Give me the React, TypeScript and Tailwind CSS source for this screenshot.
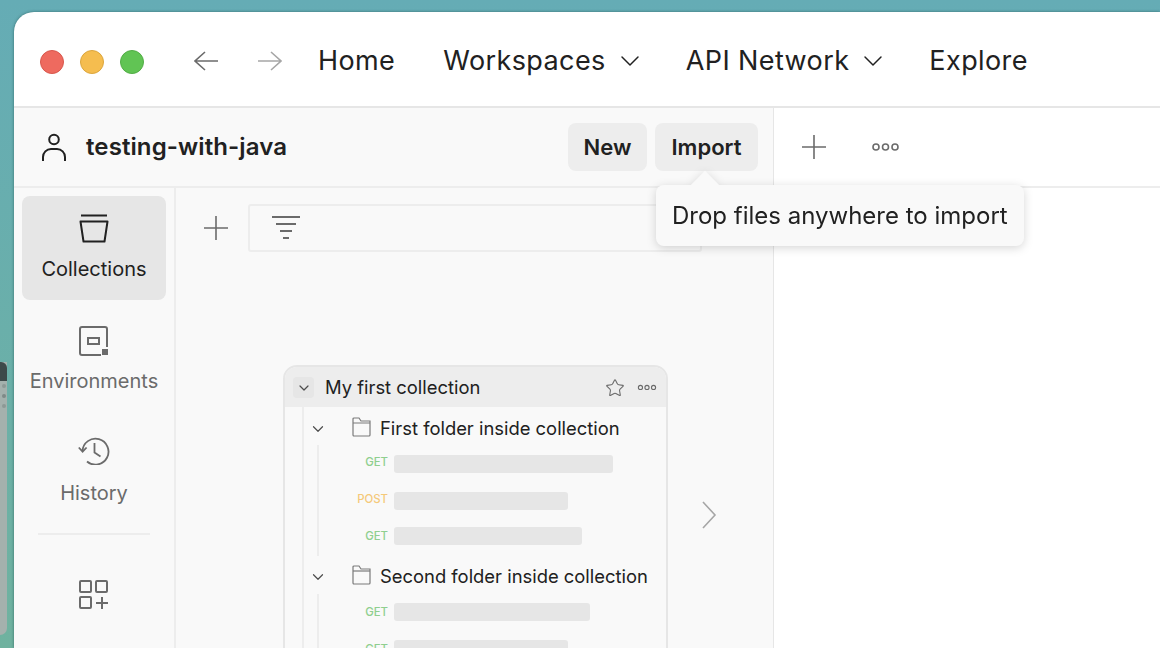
import { ChevronDown, Star } from "lucide-react";

const Dots = ({ size = 32 }: { size?: number }) => (
  <svg width={size} height={size / 2.9} viewBox="0 0 29 10" fill="none" stroke="#6b6b6b" strokeWidth="1.6">
    <circle cx="5" cy="5" r="3" />
    <circle cx="14.5" cy="5" r="3" />
    <circle cx="24" cy="5" r="3" />
  </svg>
);

const UserIcon = () => (
  <svg width="26" height="30" viewBox="0 0 26 30" fill="none" stroke="#212121" strokeWidth="2">
    <circle cx="13" cy="7.5" r="4.8" />
    <path d="M2 29v-4a8 8 0 0 1 8-8h6a8 8 0 0 1 8 8v4" />
  </svg>
);

const NavArrow = ({ next }: { next?: boolean }) => (
  <svg width="24" height="20" viewBox="0 0 24 20" fill="none" stroke={next ? "#a6a6a6" : "#6b6b6b"} strokeWidth="1.6">
    {next ? <path d="M0 10h23M13 1l10 9-10 9" /> : <path d="M24 10H1M11 1L1 10l10 9" />}
  </svg>
);

const CollectionsIcon = () => (
  <svg width="30" height="30" viewBox="0 0 30 30" fill="none" stroke="#212121" strokeWidth="2">
    <path d="M2 2h26" transform="translate(0 -0.5)" />
    <path d="M1.5 7.5h27l-3 20h-21z" strokeLinejoin="round" />
  </svg>
);

const EnvIcon = () => (
  <svg width="30" height="30" viewBox="0 0 30 30" fill="none" stroke="#6b6b6b" strokeWidth="2">
    <path d="M28 21V3a2 2 0 0 0-2-2H3a2 2 0 0 0-2 2v24a2 2 0 0 0 2 2h19" />
    <rect x="9" y="12" width="11" height="6" />
    <rect x="23" y="23" width="6" height="6" fill="#6b6b6b" stroke="none" />
  </svg>
);

const HistoryIcon = () => (
  <svg width="32" height="30" viewBox="0 0 32 30" fill="none" stroke="#6b6b6b" strokeWidth="1.8">
    <path d="M4.5 16A13 13 0 1 1 9 26.5" />
    <path d="M0.8 12.5l3.8 4.2 4-4.2" />
    <path d="M16.5 8v9.5l6 4" />
  </svg>
);

const AppsIcon = () => (
  <svg width="30" height="30" viewBox="0 0 30 30" fill="none" stroke="#6b6b6b" strokeWidth="2">
    <rect x="1" y="1" width="11" height="11" rx="1" />
    <rect x="17" y="1" width="11" height="11" rx="1" />
    <rect x="1" y="17" width="11" height="11" rx="1" />
    <path d="M23 17v12M17 23h12" />
  </svg>
);

const FilterIcon = () => (
  <svg width="30" height="26" viewBox="0 0 30 26" fill="none" stroke="#6b6b6b" strokeWidth="2">
    <path d="M1 2h28M5 9h20M9 16h12M12 23h6" />
  </svg>
);

const FolderIcon = () => (
  <svg width="19" height="20" viewBox="0 0 19 20" fill="none" stroke="#7a7a7a" strokeWidth="1.2">
    <path d="M1 18V2a1 1 0 0 1 1-1h5l2 3h9v14a1 1 0 0 1-1 1H2a1 1 0 0 1-1-1z" />
    <path d="M1 6h17" />
  </svg>
);

const PlusIcon = () => (
  <svg width="26" height="26" viewBox="0 0 26 26" fill="none" stroke="#6b6b6b" strokeWidth="1.6">
    <path d="M13 1v24M1 13h24" />
  </svg>
);

const NextIcon = () => (
  <svg width="16" height="28" viewBox="0 0 16 28" fill="none" stroke="#a6a6a6" strokeWidth="1.6">
    <path d="M2 1l12 13L2 27" />
  </svg>
);

function NavItem({ icon, label, active }: { icon: React.ReactNode; label: string; active?: boolean }) {
  return (
    <div className={`w-[144px] h-[104px] rounded-lg flex flex-col items-center pt-[18px] ${active ? "bg-[#e6e6e6] text-[#212121]" : "text-[#6b6b6b]"}`}>
      <div className="h-[30px] mb-[13px]">{icon}</div>
      <span className="text-[20px] leading-6">{label}</span>
    </div>
  );
}

function Request({ method, width, color, raised }: { method: string; width: string; color: string; raised?: boolean }) {
  return (
    <div className="flex items-center h-[18px]">
      <span className={`w-[75px] pr-[6px] text-right text-[11.4px] font-medium ${color} ${raised ? "-mt-[2px]" : "mt-[2px]"}`}>{method}</span>
      <div className={`h-[18px] rounded-[3px] bg-[#e6e6e6] ${width}`} />
    </div>
  );
}

function FolderRow({ name }: { name: string }) {
  return (
    <div className="flex items-center h-[24px] pl-[5px]">
      <ChevronDown className="w-[18px] h-[18px] text-[#4d4d4d]" strokeWidth={1.6} />
      <span className="ml-[25px] -mt-[4px]"><FolderIcon /></span>
      <span className="ml-[9px] text-[18.4px] text-[#212121] whitespace-nowrap">{name}</span>
    </div>
  );
}

export default function App() {
  return (
    <div className="relative w-[1160px] h-[648px] overflow-hidden pl-[14px] pt-[12px] bg-gradient-to-b from-[#65acb5] to-[#6fb29f] font-['Inter',sans-serif]">
      {/* app window peeking out behind */}
      <div className="absolute left-0 top-[362px] w-[7px] h-[273px] rounded-br-xl bg-[#a4b1ad] overflow-hidden">
        <div className="h-[19px] bg-[#3d4a4a] rounded-tr-md" />
        <div className="mt-[3px] flex flex-col gap-[6px] items-end pr-[1px]">
          <span className="w-[4px] h-[4px] rounded-full bg-[#8d9995]" />
          <span className="w-[4px] h-[4px] rounded-full bg-[#7f8a87]" />
          <span className="w-[4px] h-[4px] rounded-full bg-[#8d9995]" />
        </div>
      </div>

      <div className="relative h-full rounded-tl-[20px] bg-white overflow-hidden flex flex-col shadow-[0_0_3px_rgba(30,80,80,0.7)]">
        {/* top bar */}
        <div className="h-[96px] shrink-0 border-b-2 border-[#e6e6e6] flex items-center pl-[26px] pt-[4px] text-[#212121] text-[27px] tracking-[0.4px]">
          <div className="flex gap-4 mt-[2px]">
            <span className="w-[24px] h-[24px] rounded-full bg-[#ee6a5f] border border-[#d8574c]" />
            <span className="w-[24px] h-[24px] rounded-full bg-[#f5bd4f] border border-[#dca63d]" />
            <span className="w-[24px] h-[24px] rounded-full bg-[#61c454] border border-[#52ad46]" />
          </div>
          <span className="ml-[50px]"><NavArrow /></span>
          <span className="ml-[40px]"><NavArrow next /></span>
          <span className="ml-[36px]">Home</span>
          <span className="ml-[48px]">Workspaces</span>
          <ChevronDown className="ml-[8px] w-[32px] h-[32px]" strokeWidth={1.1} />
          <span className="ml-[40px]">API Network</span>
          <ChevronDown className="ml-[8px] w-[32px] h-[32px]" strokeWidth={1.1} />
          <span className="ml-[40px]">Explore</span>
        </div>

        <div className="flex flex-1 min-h-0">
          {/* left pane */}
          <div className="w-[760px] shrink-0 bg-[#f9f9f9] border-r border-[#e6e6e6] flex flex-col">
            <div className="h-[80px] shrink-0 border-b-2 border-[#ededed] flex items-center pl-[27px] pr-[15px]">
              <UserIcon />
              <span className="ml-[19px] text-[24px] tracking-[0.1px] font-semibold text-[#212121]">testing-with-java</span>
              <div className="ml-auto flex gap-2 text-[22px] font-semibold text-[#212121]">
                <span className="h-[48px] w-[79px] rounded-lg bg-[#ededed] flex items-center justify-center">New</span>
                <span className="h-[48px] w-[103px] rounded-lg bg-[#ededed] flex items-center justify-center">Import</span>
              </div>
            </div>

            <div className="flex flex-1 min-h-0">
              {/* sidebar */}
              <div className="w-[162px] shrink-0 border-r-2 border-[#ededed] px-2 pt-[8px] flex flex-col">
                <NavItem icon={<CollectionsIcon />} label="Collections" active />
                <div className="mt-[8px]">
                  <NavItem icon={<EnvIcon />} label="Environments" />
                </div>
                <div className="mt-[8px]">
                  <NavItem icon={<div className="-mt-[3px]"><HistoryIcon /></div>} label="History" />
                </div>
                <div className="mx-4 mt-[9px] h-[2px] bg-[#ededed]" />
                <div className="flex justify-center mt-[45px]">
                  <AppsIcon />
                </div>
              </div>

              {/* collections panel */}
              <div className="flex-1 min-w-0 flex flex-col">
                <div className="flex items-center pl-[27px] pt-[16px]">
                  <PlusIcon />
                  <div className="ml-[19px] w-[454px] h-[48px] rounded-[3px] border-2 border-[#ededed] flex items-center pl-[21px]">
                    <FilterIcon />
                  </div>
                </div>

                <div className="flex mt-[113px] pl-[107px]">
                  <div className="w-[385px] h-[400px] shrink-0 rounded-t-[14px] border-2 border-[#e6e6e6] bg-[#f9f9f9] overflow-hidden">
                    <div className="h-[40px] bg-[#ededed] flex items-center pl-[8px] pr-[9px] pt-[1px]">
                      <span className="w-[21px] h-[21px] rounded bg-[#e6e6e6] flex items-center justify-center">
                        <ChevronDown className="w-[16px] h-[16px] text-[#4d4d4d]" strokeWidth={1.8} />
                      </span>
                      <span className="ml-[11px] text-[18.4px] text-[#212121]">My first collection</span>
                      <Star className="ml-auto w-[20px] h-[20px] text-[#6b6b6b]" strokeWidth={1.3} />
                      <span className="ml-[12px]"><Dots size={20} /></span>
                    </div>
                    <div className="ml-[17px] h-full border-l-2 border-[#ededed] pt-[10px]">
                      <FolderRow name="First folder inside collection" />
                      <div className="ml-[13px] mt-[4px] mb-[9px] pt-[10px] pb-[11px] border-l-2 border-[#ededed]">
                        <Request method="GET" width="w-[219px]" color="text-[#8fcf8f]" raised />
                        <div className="mt-[19px]">
                          <Request method="POST" width="w-[174px]" color="text-[#f5c97a]" raised />
                        </div>
                        <div className="mt-[17px]">
                          <Request method="GET" width="w-[188px]" color="text-[#8fcf8f]" />
                        </div>
                      </div>
                      <FolderRow name="Second folder inside collection" />
                      <div className="ml-[13px] mt-[5px] pt-[9px] border-l-2 border-[#ededed]">
                        <Request method="GET" width="w-[196px]" color="text-[#8fcf8f]" />
                        <div className="mt-[19px]">
                          <Request method="GET" width="w-[174px]" color="text-[#8fcf8f]" />
                        </div>
                      </div>
                    </div>
                  </div>
                  <div className="ml-[33px] mt-[136px]">
                    <NextIcon />
                  </div>
                </div>
              </div>
            </div>
          </div>

          {/* right pane */}
          <div className="flex-1 min-w-0 bg-white">
            <div className="h-[80px] border-b-2 border-[#ededed] flex items-center pl-[27px]">
              <PlusIcon />
              <span className="ml-[44px]"><Dots size={29} /></span>
            </div>
          </div>
        </div>

        {/* import tooltip */}
        <div className="absolute left-[642px] top-[173px] h-[61px] px-[16px] pt-[1px] rounded-lg bg-[#f9f9f9] drop-shadow-[0_2px_5px_rgba(0,0,0,0.16)] flex items-center text-[24px] text-[#212121] whitespace-nowrap">
          <span className="absolute left-[39px] -top-[10px] w-[20px] h-[20px] rotate-45 bg-[#f9f9f9]" />
          <span className="relative">Drop files anywhere to import</span>
        </div>
      </div>
    </div>
  );
}
